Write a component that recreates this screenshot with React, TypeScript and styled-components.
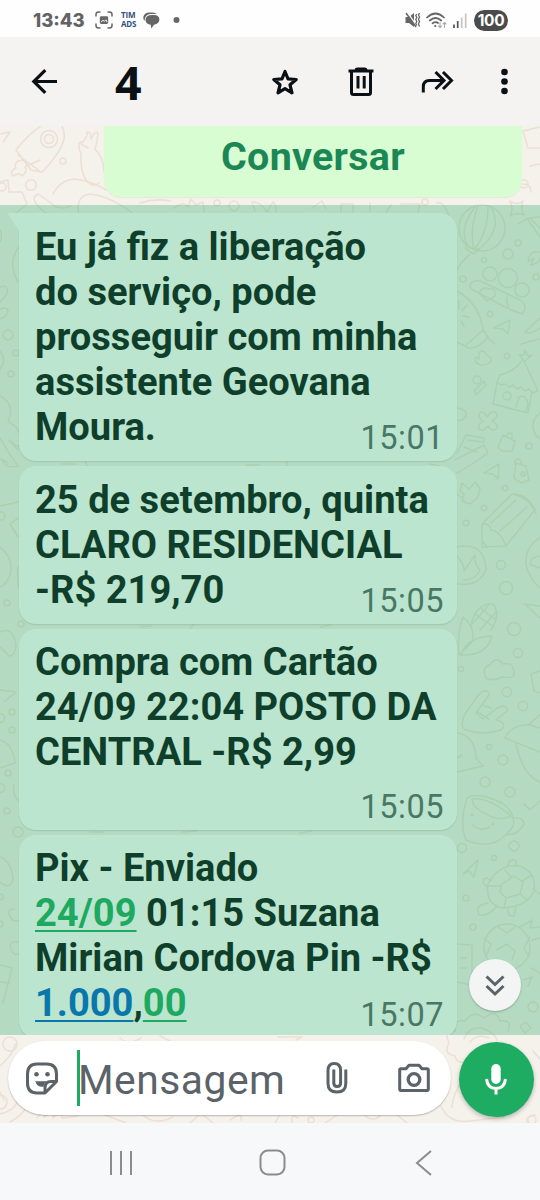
import React from 'react';
import styled, { createGlobalStyle } from 'styled-components';

const GlobalStyle = createGlobalStyle`
  * { box-sizing: border-box; }
  body { margin: 0; background: #fff; font-family: Roboto, sans-serif; }
  svg { display: block; flex: none; }
`;

const Screen = styled.div`
  width: 540px;
  height: 1200px;
  display: flex;
  flex-direction: column;
  overflow: hidden;
`;

const StatusBar = styled.header`
  height: 37px;
  flex: none;
  display: flex;
  justify-content: space-between;
  align-items: center;
  padding: 3px 32px 0 33px;
  background: #fefefe;
  color: #636363;
`;

const StatusGroup = styled.div<{ $gap: number }>`
  display: flex;
  align-items: center;
  gap: ${(p) => p.$gap}px;
`;

const Clock = styled.span`
  font: 800 18.5px/20px Inter, sans-serif;
  width: 54px;
  white-space: nowrap;
`;

const CarrierTag = styled.span`
  font: 700 8px/8.6px 'Open Sans', sans-serif;
  letter-spacing: -0.2px;
  color: #32507f;
  white-space: pre;
  width: 14px;
`;

const SignalSlot = styled.span`
  margin-right: 2px;
`;

const Battery = styled.span`
  width: 34px;
  height: 21px;
  border-radius: 11px;
  background: #4b4b4b;
  color: #fff;
  font: 700 15.5px/21px Inter, sans-serif;
  letter-spacing: -0.4px;
  text-align: center;
`;

const Toolbar = styled.nav`
  height: 89px;
  flex: none;
  display: flex;
  align-items: center;
  padding: 0 28px 0 28px;
  background: #f5f3f2;
  color: #0a1014;
`;

const SelectedCount = styled.span`
  flex: 1;
  padding-left: 55px;
  font: 700 46.5px/60px 'Noto Sans', sans-serif;
`;

const ToolbarActions = styled.div`
  display: grid;
  grid-template-columns: 76px 75px 78px 14px;
  align-items: center;
`;

const Chat = styled.main`
  position: relative;
  flex: none;
  height: 997px;
  display: flex;
  flex-direction: column;
  background: #f5f1eb;
  overflow: hidden;
`;

const Wallpaper = styled.svg`
  position: absolute;
  inset: 0;
  fill: none;
  stroke: #ecdfd4;
  stroke-width: 1.5;
  stroke-linejoin: round;
  stroke-linecap: round;
`;

const ReplyButton = styled.button`
  position: relative;
  flex: none;
  width: 418px;
  height: 70.5px;
  margin: 0 0 8.5px 104px;
  padding: 0 0 9px;
  border: 0;
  border-radius: 0 0 17px 17px;
  background: #d8fdd2;
  color: #1b8755;
  box-shadow: 0 1px 1px rgba(0, 0, 0, 0.05);
  font: 700 39.4px/45px Roboto, sans-serif;
  letter-spacing: 0.3px;
`;

const Selection = styled.section`
  position: relative;
  flex: none;
  height: 830px;
  padding: 8px 0 0 19px;
  display: flex;
  flex-direction: column;
  align-items: flex-start;
  gap: 5px;
  overflow: hidden;

  &::after {
    content: '';
    position: absolute;
    inset: 0;
    background: rgba(29, 170, 97, 0.3);
    pointer-events: none;
  }
`;

const Bubble = styled.article<{ $height: number; $top: number; $tail?: boolean }>`
  position: relative;
  flex: none;
  display: grid;
  width: 438px;
  height: ${(p) => p.$height}px;
  padding: ${(p) => p.$top}px 13px 4px 16px;
  border-radius: ${(p) => (p.$tail ? '0 17px 17px 17px' : '17px')};
  background: #fff;
  color: #0a1014;
  box-shadow: 0 1px 1.5px rgba(0, 0, 0, 0.13);
`;

const Tail = styled.svg`
  position: absolute;
  left: -12px;
  top: 0;
`;

const Message = styled.p`
  grid-area: 1 / 1;
  margin: 0;
  font-weight: 700;
  font-size: 38.1px;
  line-height: 45px;
  white-space: nowrap;
`;

const Line = styled.span`
  display: block;
`;

const Link = styled.span<{ $color: string }>`
  color: ${(p) => p.$color};
  text-decoration: underline;
  text-decoration-thickness: 2px;
  text-underline-offset: 4px;
  text-decoration-skip-ink: none;
`;

const Time = styled.time`
  grid-area: 1 / 1;
  align-self: end;
  justify-self: end;
  font-size: 32.5px;
  line-height: 38px;
  letter-spacing: 0.5px;
  color: #5b6368;
`;

const Composer = styled.footer`
  position: relative;
  flex: none;
  height: 88px;
  padding: 6px 6px 0 8px;
  display: flex;
  align-items: flex-start;
  gap: 7.5px;
`;

const InputPill = styled.div`
  flex: none;
  width: 443px;
  height: 74px;
  border-radius: 37px;
  background: #fff;
  box-shadow: 0 1px 1.5px rgba(0, 0, 0, 0.25);
  display: flex;
  align-items: center;
  padding-left: 17px;
  color: #5b6368;
`;

const Caret = styled.span`
  flex: none;
  width: 3px;
  height: 56px;
  margin: 0 0 1px 18px;
  background: #1daa61;
`;

const Placeholder = styled.span`
  flex: none;
  width: 247px;
  margin-left: -2px;
  padding-top: 3px;
  font-size: 40.8px;
  line-height: 48px;
  letter-spacing: 0.5px;
`;

const CameraSlot = styled.span`
  margin-left: 48px;
`;

const MicButton = styled.button`
  flex: none;
  width: 75px;
  height: 75px;
  margin-top: 1px;
  padding: 0;
  border: 0;
  border-radius: 50%;
  background: #1eac62;
  box-shadow: 0 2px 4px rgba(0, 0, 0, 0.25);
  display: grid;
  place-items: center;
`;

const JumpButton = styled.button`
  position: absolute;
  left: 469px;
  top: 833px;
  width: 52px;
  height: 52px;
  padding: 0;
  border: 0;
  border-radius: 50%;
  background: #f2f5f3;
  box-shadow: 0 1px 2px rgba(0, 0, 0, 0.25);
  display: grid;
  place-items: center;
`;

const SystemNav = styled.nav`
  flex: 1;
  display: grid;
  grid-template-columns: 149.5px 156px 18px;
  align-items: center;
  padding: 2px 0 0 109px;
  background: #f6f8fa;
`;

const Doodles = () => (
  <Wallpaper width="540" height="997" viewBox="0 126 540 997">
    {/* rocket, stars and peace hand */}
    <path d="M16 150C26 137 39 125 54 119Q66 125 64 139C61 151 53 161 42 172L31 170L16 150ZM18 155L41 172M29 165L40 160" />
    <circle cx="49" cy="139" r="8.5" /><circle cx="49" cy="139" r="4.5" />
    <path d="M23 160Q13 161 16 168Q9 171 13 176Q20 172 22 176Q28 171 25 167Q30 164 23 160ZM0 134L10 132L3 142M0 182L8 180L9 192L22 192L27 204L14 215" />
    <path d="M81 154Q76 141 83 142Q88 136 87 132Q91 131 91 139Q96 129 98 134Q97 143 95 149Q104 158 104 172M81 154Q80 176 90 184Q96 187 99 183M81 144L88 148" />
    <circle cx="63" cy="161" r="3" /><circle cx="31" cy="185" r="5.3" /><circle cx="2" cy="187" r="4" />
    <path d="M53 194Q60 180 75 179Q94 182 106 190M71 206Q58 211 51 203L38 194Q30 198 39 207Q44 214 54 215H66M79 215Q75 195 91 194Q112 197 135 215M140 203Q155 198 170 201" />
    {/* row beneath the reply button */}
    <path d="M174 208Q184 201 188 207L191 199L196 205L203 202L204 213M255 211L252 202Q260 201 267 212L273 202Q277 205 276 215M312 208L322 201L326 209M341 216V204H353V215M370 203V217M391 205L384 216M401 204H420L417 216M437 203Q444 201 449 216" />
    <circle cx="217" cy="203" r="3" /><circle cx="234" cy="206" r="5" /><circle cx="425" cy="202" r="3" />
    <path d="M523 131L540 127M523 131L528 148H540M530 166L540 164M523 184Q531 184 531 192M510 201Q517 206 523 201Q520 209 524 215Q516 212 510 216Q514 209 510 201" />
    <circle cx="524" cy="184" r="4" />
    {/* lantern and pickaxe */}
    <circle cx="482" cy="228" r="23" />
    <path d="M475 207Q457 230 469 248M478 206Q469 230 474 250M488 206Q488 233 474 250M492 209Q503 230 478 250M466 243Q471 250 479 249L474 254L466 249ZM470 254L461 263L457 270M518 224Q528 216 540 217M528 220L540 237M530 218L540 228M540 252Q529 250 528 262L534 258L531 265Q540 263 540 258" />
    <circle cx="518" cy="243" r="3" /><circle cx="508" cy="254" r="5" /><circle cx="484" cy="260" r="2.6" /><circle cx="536" cy="277" r="3" /><circle cx="463" cy="279" r="3" />
    {/* hot dog and sauces */}
    <circle cx="490" cy="274" r="7" /><circle cx="508" cy="278" r="9.5" /><circle cx="522" cy="290" r="7" />
    <path d="M479 293Q466 288 472 282Q477 279 485 283L520 300Q529 306 522 314L507 308L479 293Q482 286 489 289Q496 287 495 296L487 301ZM507 296Q506 305 510 310" />
    <path d="M457 291Q480 304 483 330L465 346L457 342M483 330L488 337Q479 349 468 348L464 345M487 337L495 344M459 309V301M462 311L467 305M463 316L469 317M461 321L464 326" />
    <circle cx="490" cy="314" r="2.8" /><path d="M494 328L510 320L508 334L503 329ZM540 318L525 332Q528 336 540 328M521 344L540 339" />
    <path d="M479 353Q482 348 486 354L491 358Q492 365 481 365Q473 363 476 357L479 359Z" /><circle cx="507" cy="356" r="2.7" />
    {/* house */}
    <path d="M500 375Q516 371 523 359L538 391M500 375L497 382L501 385L505 384L509 387L513 385L517 389L521 387L525 391L529 389L533 393L538 391M497 383L493 404L528 413L532 392M523 359L519 355L524 355L525 350L528 356L532 355L525 361M516 407L519 397Q526 394 528 404L526 412" />
    <circle cx="507" cy="396" r="4" /><circle cx="477" cy="380" r="4" /><path d="M474 391L484 381L486 385L476 395ZM457 408Q467 409 466 415Q464 422 457 420M540 413Q532 419 533 428Q535 437 540 438" />
    {/* bandage cross, locks, tent */}
    <path d="M480 413Q483 410 487 417Q492 409 496 413Q499 417 492 421Q500 425 496 429Q492 432 488 426Q482 433 479 429Q477 425 483 421Q477 417 480 413Z" />
    <path d="M503 435L515 441L512 451Q500 453 498 447ZM507 437Q507 431 512 434V440M516 463L526 466L529 480L521 483L514 478ZM515 464Q514 457 520 460L522 465" />
    <circle cx="523" cy="474" r="2" /><circle cx="529" cy="446" r="3" />
    <path d="M457 453L466 435L484 438V442L468 440M484 445L488 453Q470 466 457 473M484 445L455 460M464 447L477 452M484 473L499 464L498 479L493 474ZM462 483L469 489L475 482L480 489L478 497L470 504L462 501L464 494L460 491ZM457 494L464 500" />
    <circle cx="505" cy="488" r="2.8" /><circle cx="484" cy="508" r="2.8" /><circle cx="466" cy="523" r="2.8" />
    {/* pencil */}
    <path d="M482 547V524L512 494Q528 494 535 510L506 546ZM482 524Q490 523 491 530Q499 530 506 546M491 523L516 500M500 531L527 507M513 494Q531 499 536 514M482 541L487 547" />
    {/* flame and globe */}
    <path d="M457 547Q484 541 486 569Q480 587 457 584M457 556Q465 565 464 571L475 555Q474 564 480 570Q476 580 464 580M540 538Q525 546 526 565Q530 580 540 588M540 556Q528 558 531 565L540 568" />
    <circle cx="501" cy="565" r="4.5" /><circle cx="506" cy="588" r="6.5" />
    {/* corn and cloud */}
    <path d="M471 626Q475 603 493 604Q501 614 491 630M463 617Q476 628 472 642L459 655Q457 632 463 617ZM461 655Q466 637 492 636Q487 656 461 655M475 614L494 627M480 608L496 620M473 623L488 606M480 630L497 611M527 606L540 618M524 604L540 606" />
    <circle cx="514" cy="629" r="6.5" /><circle cx="518" cy="653" r="4.5" /><circle cx="461" cy="669" r="2.6" />
    <path d="M486 678Q481 667 490 665Q496 655 503 664Q513 662 514 672Q516 679 502 677Q494 682 486 678ZM531 674L540 671M531 674L534 691L540 693" />
    {/* hand and cap */}
    <path d="M465 714Q459 727 466 730Q483 736 501 730Q508 723 496 720L507 711Q508 703 497 708L483 719L476 713L489 695Q488 687 479 694ZM483 705L491 708M477 712L489 719" />
    <circle cx="507" cy="692" r="4.7" /><circle cx="523" cy="706" r="4.7" /><path d="M505 738Q511 724 530 725L540 728M505 738L540 752M516 743Q522 775 540 782M540 715L528 725" />
    {/* shell */}
    <path d="M457 733Q475 735 476 758L483 766L457 772M457 758L462 755" />
    <circle cx="489" cy="747" r="2.6" /><circle cx="503" cy="760" r="5" /><circle cx="485" cy="782" r="5" /><circle cx="510" cy="792" r="5" />
    {/* smiling mug */}
    <path d="M467 798Q477 791 502 803Q516 813 513 826Q496 853 466 840Q459 824 467 798ZM472 799Q489 797 511 816Q495 824 474 806ZM512 818Q524 817 524 824Q516 837 506 834M473 825Q480 832 490 827M524 804L530 810L540 801" />
    <circle cx="472" cy="815" r="1" /><circle cx="493" cy="824" r="1" /><circle cx="462" cy="848" r="4.5" /><circle cx="514" cy="846" r="5" /><circle cx="494" cy="858" r="2.5" />
    {/* turtle and football */}
    <path d="M463 874L478 860L474 877L469 871ZM488 884Q499 863 520 866Q537 873 534 891Q527 907 502 908Q485 904 488 884ZM502 884L514 876L523 882L520 894L506 898L500 892ZM488 886L501 886M511 877L505 870M522 881L532 875M520 894L527 900M506 898L504 908M487 887Q479 880 487 878L491 881M488 903Q474 905 479 915Q490 916 496 907M508 909Q507 917 514 916L516 908M508 865Q510 857 516 861V866M533 889L540 894" />
    <circle cx="466" cy="898" r="3" /><circle cx="473" cy="927" r="3" />
    <circle cx="507" cy="947" r="23" /><path d="M498 927L507 933L515 927M484 938L491 944L486 957M497 950L507 944L515 951L512 960M530 937L524 948L529 957M520 927L532 920L530 928L540 927M457 944L472 945V985L457 982M461 958H466M461 968H466M523 980L532 977L528 986" />
    <circle cx="533" cy="1007" r="5" /><path d="M520 1026L526 1022L531 1028L525 1033ZM532 940L540 938M531 968L540 973" />
    <path d="M449 1043Q443 1031 455 1031Q454 1018 465 1021Q474 1009 484 1018Q496 1008 500 1021Q513 1019 508 1031M449 1043Q443 1054 455 1056Q457 1065 469 1061M464 1039Q469 1026 482 1028Q494 1032 497 1040M470 1042Q477 1033 489 1038" />
    {/* left edge */}
    <path d="M0 230Q3 235 0 242M19 247Q7 262 18 282M0 287Q9 284 7 294L0 302M0 309Q8 306 8 312Q5 318 0 319M0 351Q7 361 0 369M0 396Q16 405 8 421L17 428Q23 439 18 447L9 440L18 450M0 438Q9 454 18 466Q7 470 1 459L8 463M0 506L18 502M18 518L10 524L18 537M0 547Q14 558 10 575Q6 585 0 587M0 632Q13 626 16 645Q15 656 9 656L0 647M18 567Q17 581 19 589M0 690L16 692L5 701M0 740Q13 744 15 763L0 768M14 785Q12 796 19 801M0 857Q12 862 13 880Q10 890 0 882M14 909Q7 909 10 917Q14 923 20 920M18 942Q8 940 11 950Q15 957 20 953M0 965L12 968L3 1003M0 982L10 983" />
    <circle cx="8" cy="335" r="5" /><circle cx="16" cy="353" r="3" /><circle cx="11" cy="374" r="3" /><circle cx="1" cy="516" r="4" /><circle cx="7" cy="603" r="3" /><circle cx="21" cy="624" r="3" /><circle cx="12" cy="712" r="3" /><circle cx="0" cy="718" r="4.5" /><circle cx="12" cy="730" r="3" /><circle cx="8" cy="773" r="3" /><circle cx="0" cy="788" r="4.5" /><circle cx="7" cy="811" r="3" /><circle cx="18" cy="832" r="5" /><circle cx="0" cy="897" r="3" /><circle cx="0" cy="924" r="3" />
    {/* between the bubbles */}
    <path d="M62 464H75M85 461L88 468M246 465H260M287 461V468M430 464L440 466M140 627L151 626M190 629L193 625M320 627L331 625M90 832H103M182 832L197 831M300 833L311 831" />
    {/* around the composer */}
    <path d="M120 1038Q128 1046 141 1038M0 1066Q15 1052 15 1044M160 1036L170 1041M278 1037H302L296 1040M0 1092L4 1100M18 1098Q17 1110 0 1114M26 1108Q20 1117 10 1122M37 1118Q45 1109 44 1117Q55 1110 53 1118Q62 1109 62 1118L78 1116M105 1115L126 1123M143 1115Q155 1126 173 1117M190 1123L201 1113L213 1123M230 1120Q243 1111 241 1120M275 1123L280 1114M292 1123Q290 1113 298 1118M325 1123L340 1113M365 1116Q375 1123 381 1114M397 1115L407 1123M441 1106Q449 1124 470 1121L504 1117M452 1107Q453 1093 463 1080M533 1051L540 1059M527 1123Q525 1116 535 1115" />
    <circle cx="10" cy="1044" r="7" /><circle cx="0" cy="1102" r="7" /><circle cx="311" cy="1120" r="3" /><circle cx="532" cy="1120" r="4" />
  </Wallpaper>
);

const CaptureIcon = () => (
  <svg width="18" height="18" viewBox="0 0 18 18" fill="none" stroke="#686868" strokeWidth="1.5" strokeLinecap="round">
    <path d="M1 5V3.5Q1 1 3.5 1H5M13 1h1.5Q17 1 17 3.500V5M17 13v1.500Q17 17 14.500 17H13M5 17H3.500Q1 17 1 14.500V13" />
    <rect x="4.800" y="5.300" width="8.400" height="7.600" rx="1.400" fill="#686868" stroke="none" />
    <path d="M6.300 10.800L8 9.300L9.500 10.300L11 8.800L12 10.800" stroke="#fff" strokeWidth="0.900" />
  </svg>
);

const ChatIcon = () => (
  <svg width="17" height="17" viewBox="0 0 17 17" fill="#666">
    <path d="M1.500 9Q0 7 0.300 5Q1 0.600 6.500 0.400H9.500Q12.500 0.500 13.800 2H7.500Q1.800 2.300 1.500 9Z" />
    <path d="M9 3H11Q16.300 3.200 16.400 7.500Q16.200 11.700 11 12.800L8.300 16.500L7.800 12.800Q2.600 12 2.500 7.700Q2.700 3.200 9 3Z" />
  </svg>
);

const MutedIcon = () => (
  <svg width="16" height="16" viewBox="0 0 16 16" fill="#666">
    <path d="M0.500 5H4L9 1V15L4 11H0.500Z" />
    <path d="M2 0L12 14" stroke="#fefefe" strokeWidth="1.300" />
    <path d="M1 1L11 15" stroke="#666" strokeWidth="1.500" />
    <path d="M11.800 2l-1 1.500 1 2-1 2 1 2-1 2 1 2M14.500 1l-1 2 1 2-1 2.500 1 2-1 2.500 1 2.500" stroke="#666" strokeWidth="1.300" fill="none" />
  </svg>
);

const WifiIcon = () => (
  <svg width="22" height="17" viewBox="0 0 22 17" fill="none" stroke="#666" strokeWidth="1.700" strokeLinecap="round">
    <path d="M1 5.500Q9.500 -2.500 18 5.500M3.800 8.500Q9.500 3.500 15.200 8.500M6.500 11.300Q9.500 9 12 11" />
    <circle cx="9.300" cy="14" r="1.100" fill="#666" stroke="none" />
    <path d="M14 10.500V15.500M12.500 14L14 15.500L15.500 14M18.500 15.500V10.500M17 12L18.500 10.500L20 12" stroke="#aaa" strokeWidth="1.100" />
  </svg>
);

const SignalIcon = () => (
  <svg width="14" height="15" viewBox="0 0 14 15">
    <path d="M1 15v-3.500M4.700 15V8" stroke="#555" strokeWidth="1.700" />
    <path d="M8.700 15V4.500M12.700 15V0.500" stroke="#c4c4c4" strokeWidth="1.700" />
  </svg>
);

const BackArrow = () => (
  <svg width="32" height="32" viewBox="0 0 32 32" fill="none" stroke="currentColor" strokeWidth="3.200">
    <path d="M29 15.500H5.500M17.300 4.100L5.800 15.500L17.300 26.900" />
  </svg>
);

const StarIcon = () => (
  <svg width="32" height="34" viewBox="0 0 32 34" fill="none" stroke="currentColor" strokeWidth="3.200" strokeLinejoin="round">
    <path d="M16 6.500L19 13.800L27.200 14.500L21 19.800L23 27.800L16 23.700L9 27.800L11 19.800L4.800 14.500L13 13.800Z" />
  </svg>
);

const TrashIcon = () => (
  <svg width="32" height="32" viewBox="0 0 32 32" fill="none" stroke="currentColor" strokeWidth="3">
    <path d="M3.500 5H28.500M11 4.500Q11 3 12.500 3H19.500Q21 3 21 4.500M6.500 5V26.500Q6.500 28.500 8.500 28.500H23.500Q25.500 28.500 25.500 26.500V5M13 10V22.500M19.200 10V22.500" />
  </svg>
);

const ForwardIcon = () => (
  <svg width="34" height="32" viewBox="0 0 34 32" fill="none" stroke="currentColor" strokeWidth="3">
    <path d="M3.300 26.500V21Q3.300 14.500 9.500 14.500H23M15.500 6L24 14.500L15.500 23M23 6L31.500 14.500L23 23" />
  </svg>
);

const MoreIcon = () => (
  <svg width="14" height="32" viewBox="0 0 14 32" fill="currentColor">
    <circle cx="6.500" cy="6" r="3.300" /><circle cx="6.500" cy="15.500" r="3.300" /><circle cx="6.500" cy="25" r="3.300" />
  </svg>
);

const StickerIcon = () => (
  <svg width="34" height="34" viewBox="0 0 34 34" fill="none" stroke="#5b6368" strokeWidth="3" strokeLinejoin="round">
    <path d="M12 3H21.500Q31.500 3 31.500 13V20.500L20 32H12Q2.500 32 2.500 22V13Q2.500 3 12 3Z" />
    <path d="M20 31.500V27Q20 20.500 26 20.500H31.500" />
    <path d="M10.300 20.300H21.500Q18.800 22.500 18.500 25.800Q12 26.500 10.300 20.300Z" fill="#5b6368" stroke="none" />
    <circle cx="11.500" cy="13.200" r="2.300" fill="#5b6368" stroke="none" />
    <circle cx="22.500" cy="13.200" r="2.300" fill="#5b6368" stroke="none" />
  </svg>
);

const ClipIcon = () => (
  <svg width="24" height="34" viewBox="0 0 24 34" fill="none" stroke="#5b6368" strokeWidth="3">
    <path d="M20.800 8.500V22.500Q20.800 31 12 31Q3 31 3 22.500V9.500Q3 2.500 9.300 2.500Q15.600 2.500 15.600 9.500V22Q15.600 25.500 12.200 25.500Q8.800 25.500 8.800 22V8.500" />
  </svg>
);

const CameraIcon = () => (
  <svg width="34" height="32" viewBox="0 0 34 32" fill="none" stroke="#5b6368" strokeWidth="3" strokeLinejoin="round">
    <path d="M2.700 8Q2.700 6.700 4 6.700H9L12 3.200H22L25 6.700H30Q31.300 6.700 31.300 8V26.800Q31.300 28.500 30 28.500H4Q2.700 28.500 2.700 26.800Z" />
    <circle cx="17" cy="17.500" r="5.800" strokeWidth="3.300" />
  </svg>
);

const MicIcon = () => (
  <svg width="26" height="34" viewBox="0 0 26 34" fill="none" stroke="#fff" strokeWidth="3">
    <rect x="8.300" y="1" width="9.400" height="20" rx="4.700" fill="#fff" stroke="none" />
    <path d="M3.500 16Q4.500 25.500 13 25.500Q21.500 25.500 22.500 16M13 25.500V31.500" />
  </svg>
);

const messages = [
  {
    height: 248,
    top: 11.5,
    time: '15:01',
    tail: true,
    lines: ['Eu já fiz a liberação', 'do serviço, pode', 'prosseguir com minha', 'assistente Geovana', 'Moura.'],
  },
  { height: 158, top: 11.5, time: '15:05', lines: ['25 de setembro, quinta', 'CLARO RESIDENCIAL', '-R$ 219,70'] },
  { height: 201, top: 10.5, time: '15:05', lines: ['Compra com Cartão', '24/09 22:04 POSTO DA', 'CENTRAL -R$ 2,99'] },
  {
    height: 203,
    top: 10.5,
    time: '15:07',
    lines: [
      'Pix - Enviado',
      <React.Fragment key="date"><Link $color="#1daa61">24/09</Link> 01:15 Suzana</React.Fragment>,
      'Mirian Cordova Pin -R$',
      <React.Fragment key="amount"><Link $color="#0062cb">1.000</Link>,<Link $color="#1daa61">00</Link></React.Fragment>,
    ],
  },
];

export default function App() {
  return (
    <Screen>
      <GlobalStyle />
      <StatusBar>
        <StatusGroup $gap={8}>
          <Clock>13:43</Clock>
          <CaptureIcon />
          <CarrierTag>{'TIM\nADS'}</CarrierTag>
          <ChatIcon />
          <svg width="16" height="6" viewBox="0 0 16 6"><circle cx="8.500" cy="3" r="3" fill="#666" /></svg>
        </StatusGroup>
        <StatusGroup $gap={5}>
          <MutedIcon />
          <WifiIcon />
          <SignalSlot><SignalIcon /></SignalSlot>
          <Battery>100</Battery>
        </StatusGroup>
      </StatusBar>
      <Toolbar>
        <BackArrow />
        <SelectedCount>4</SelectedCount>
        <ToolbarActions>
          <StarIcon />
          <TrashIcon />
          <ForwardIcon />
          <MoreIcon />
        </ToolbarActions>
      </Toolbar>
      <Chat>
        <Doodles />
        <ReplyButton>Conversar</ReplyButton>
        <Selection>
          {messages.map((m, i) => (
            <Bubble key={i} $height={m.height} $top={m.top} $tail={m.tail}>
              {m.tail && (
                <Tail width="13" height="20" viewBox="0 0 13 20">
                  <path d="M13 0H2Q0 0 1.500 2L13 19Z" fill="#fff" />
                </Tail>
              )}
              <Message>
                {m.lines.map((line, j) => <Line key={j}>{line}</Line>)}
              </Message>
              <Time>{m.time}</Time>
            </Bubble>
          ))}
        </Selection>
        <JumpButton>
          <svg width="22" height="24" viewBox="0 0 22 24" fill="none" stroke="#5b6368" strokeWidth="3">
            <path d="M2.500 3.500L11 11.500L19.500 3.500M2.500 13L11 21L19.500 13" />
          </svg>
        </JumpButton>
        <Composer>
          <InputPill>
            <StickerIcon />
            <Caret />
            <Placeholder>Mensagem</Placeholder>
            <ClipIcon />
            <CameraSlot><CameraIcon /></CameraSlot>
          </InputPill>
          <MicButton><MicIcon /></MicButton>
        </Composer>
      </Chat>
      <SystemNav>
        <svg width="24" height="26" viewBox="0 0 24 26" stroke="#8a8c8e" strokeWidth="2"><path d="M2 1V25M12 1V25M22 1V25" /></svg>
        <svg width="27" height="27" viewBox="0 0 27 27" fill="none" stroke="#8a8c8e" strokeWidth="2"><rect x="1.500" y="1.500" width="24" height="24" rx="7.500" /></svg>
        <svg width="18" height="26" viewBox="0 0 18 26" fill="none" stroke="#8a8c8e" strokeWidth="2"><path d="M16 1L2 13L16 25" /></svg>
      </SystemNav>
    </Screen>
  );
}
